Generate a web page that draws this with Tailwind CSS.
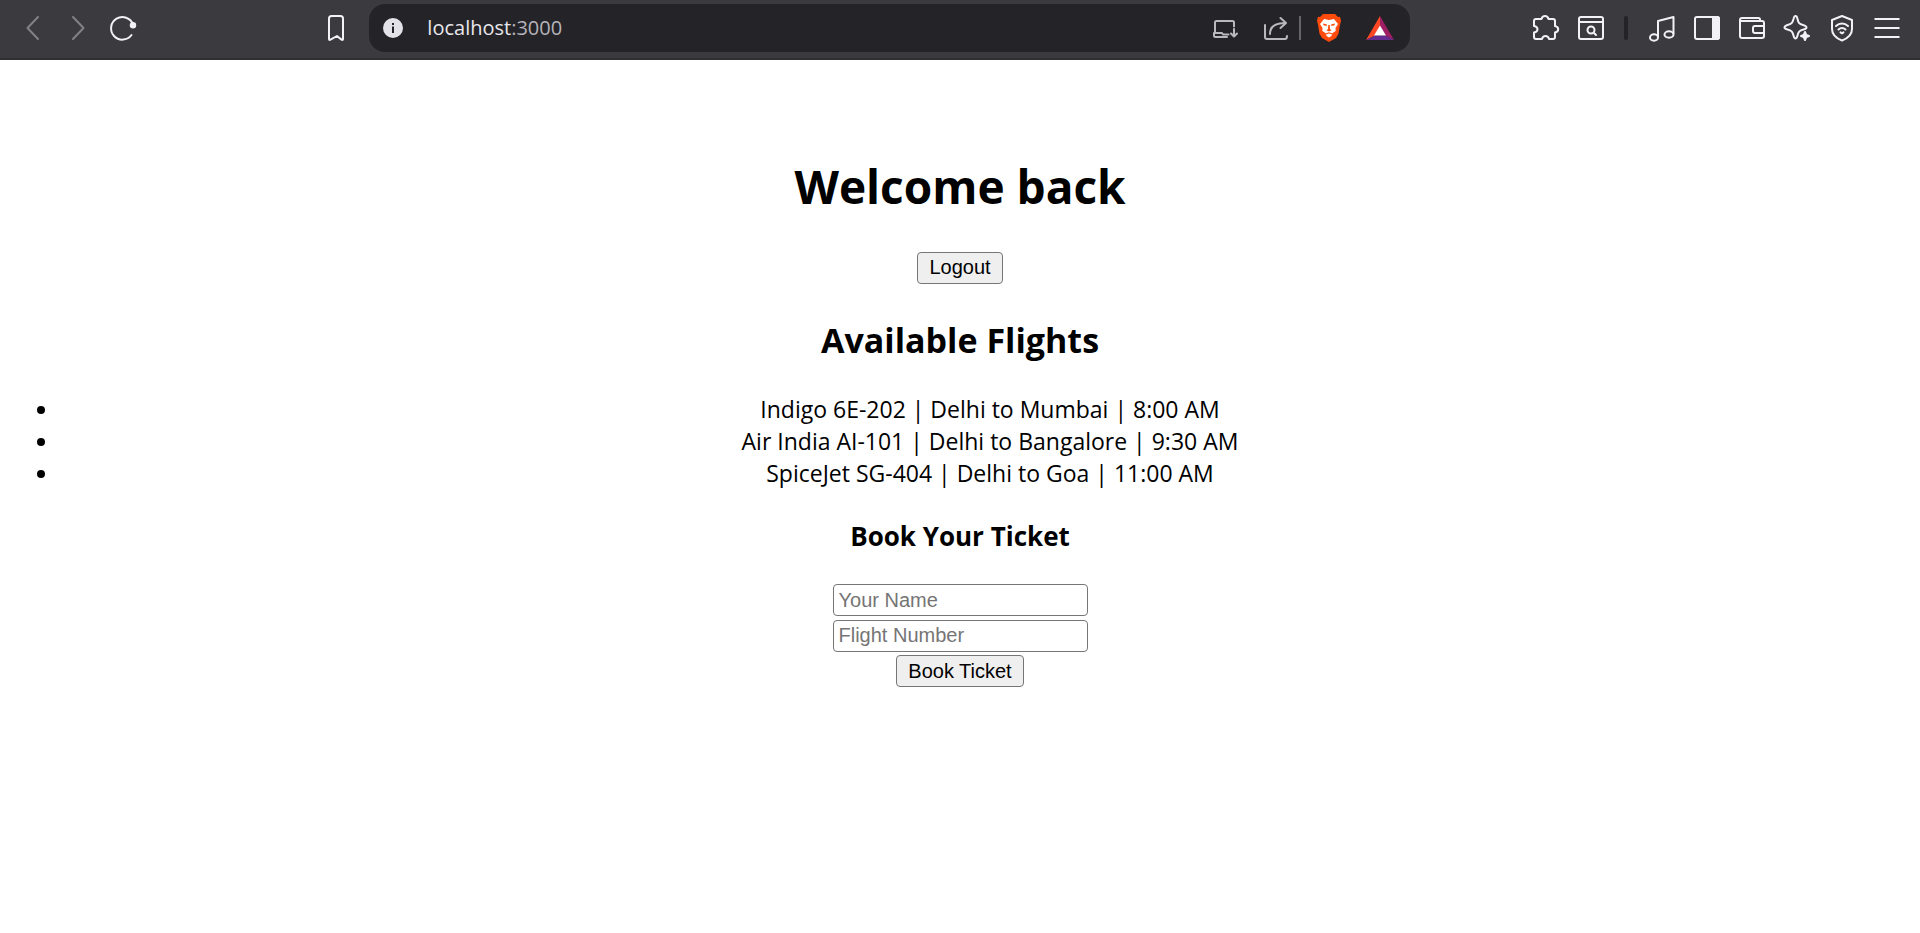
<!DOCTYPE html>
<html lang="en">
<head>
<meta charset="utf-8">
<meta name="viewport" content="width=device-width, initial-scale=1">
<title>Flight Booking</title>
<script src="https://cdn.jsdelivr.net/npm/@tailwindcss/browser@4"></script>
</head>
<body class="min-h-screen bg-white text-black font-['Segoe_UI','Open_Sans',sans-serif]">
<header class="flex h-[60px] items-start border-b-2 border-[#2f2e33] bg-[#3b3a3f] pt-1 pr-[11px] pl-[10px] text-[#f2f1f7]">
  <nav class="flex h-12 items-center" aria-label="Navigation">
    <button class="flex w-[45px] justify-center text-[#828187]" aria-label="Back"><svg class="size-7" viewBox="0 0 28 28" fill="none" stroke="currentColor" stroke-width="2" stroke-linecap="round" stroke-linejoin="round"><path d="M19 3 8.500 14 19 25"/></svg></button>
    <button class="flex w-[45px] justify-center text-[#828187]" aria-label="Forward"><svg class="size-7" viewBox="0 0 28 28" fill="none" stroke="currentColor" stroke-width="2" stroke-linecap="round" stroke-linejoin="round"><path d="M9 3 19.500 14 9 25"/></svg></button>
    <button class="flex w-[45px] justify-center" aria-label="Reload"><svg class="size-7" viewBox="0 0 28 28" fill="none" stroke="currentColor" stroke-width="2" stroke-linecap="round"><path d="M24 10.500A11.300 11.300 0 1 0 22.500 21"/><circle cx="24" cy="11.300" r="3.200" fill="currentColor" stroke="none"/></svg></button>
  </nav>
  <button class="mr-[11px] ml-auto flex h-12 w-[45px] shrink-0 items-center justify-center" aria-label="Bookmark"><svg class="size-7" viewBox="0 0 28 28" fill="none" stroke="currentColor" stroke-width="2" stroke-linejoin="round"><path d="M8.500 2h9a2.500 2.500 0 0 1 2.500 2.500V25q0 1.500-1.500.6L14 22 7.500 25.600Q6 26.500 6 25V4.500A2.500 2.500 0 0 1 8.500 2Z" transform="translate(1 0)"/></svg></button>
  <div class="flex h-12 w-[54.8%] shrink-0 items-center rounded-2xl bg-[#242328] pr-4 pl-[14px]">
    <button aria-label="Site information"><svg class="size-5" viewBox="0 0 20 20"><circle cx="10" cy="10" r="10" fill="#e4e2e9"/><path d="M9 5h2v2H9zM9 8.500h2V15H9z" fill="#242328"/></svg></button>
    <div class="ml-6 text-[20px] leading-7 text-[#e8e7ec]">localhost<span class="text-[#b5b4ba]">:3000</span></div>
    <div class="ml-auto flex items-center text-[#b9b8bf]">
      <button class="mr-[23px]" aria-label="Install app"><svg class="size-7" viewBox="0 0 28 28" fill="none" stroke="currentColor" stroke-width="2" stroke-linecap="round" stroke-linejoin="round"><path d="M4 18V8.500A1.500 1.500 0 0 1 5.500 7h16A1.500 1.500 0 0 1 23 8.500v4M3 19h8l1 1.500h5.500M16 23H4.500A1.500 1.500 0 0 1 3 21.500V19M23 15v7M20 19.500l3 3 3-3"/></svg></button>
      <button class="mr-[9px]" aria-label="Share"><svg class="size-7" viewBox="0 0 28 28" fill="none" stroke="currentColor" stroke-width="2" stroke-linecap="round" stroke-linejoin="round"><path d="M3 11v12a2 2 0 0 0 2 2h18q2 0 2-3M8 20C8 13 12 9 23 9M18.500 4l5.500 5-5.500 5"/></svg></button>
      <span class="h-6 w-[2px] bg-[#65646a]"></span>
      <button class="ml-[14px]" aria-label="Brave Shields"><svg class="size-7" viewBox="0 0 28 28"><path d="M8 0h12l3 3 2-.2 1 4-1 4-1.500 9L21 24l-7 4-7-4-2.500-4.200L3 10.800 2 6.800l1-4L5 3z" fill="#ff4b0b"/><path d="m9 5 5 1 5-1 4 5-2.500 4 .2 3-3.200 2-1 3-2.500 1.500L11.500 22l-1-3-3.200-2 .2-3L5 10z" fill="#fff"/><path d="m8 9.500 4 .9-.5 1.600-3-.7zM20 9.500l-4 .9.500 1.600 3-.7zM13.300 11h1.400l.3 4 1.500 1.300L14 17.500l-2.500-1.200L13 15zM10.500 19.500 14 18.300l3.500 1.200-.7.900L14 19.500l-2.800.9z" fill="#ff4b0b"/></svg></button>
      <button class="ml-[23px]" aria-label="Brave Rewards"><svg class="size-7" viewBox="0 0 28 28"><path d="M14 2 0 26l9-4.500 5-9z" fill="#ff4724"/><path d="m14 2 14 24-9-4.500-5-9z" fill="#9e1f63"/><path d="M0 26h28l-9-4.500H9z" fill="#662d91"/><path d="m14 11.500 6 10H8z" fill="#fff"/></svg></button>
    </div>
  </div>
  <div class="ml-[113px] flex h-12 shrink-0 items-center">
    <button class="flex w-[45px] justify-center" aria-label="Extensions"><svg class="size-7" viewBox="0 0 28 28" fill="none" stroke="currentColor" stroke-width="2" stroke-linejoin="round"><path d="M4 5h5.500C10 3 11 2 13 2s3 1 3.500 3H21a2 2 0 0 1 2 2v5c2 .5 3.200 1.500 3.200 3.200S25 18 23 18.500V23a2 2 0 0 1-2 2h-4c-.5-2-1.500-3-3.500-3S10.500 23 10 25H4a2 2 0 0 1-2-2v-4.500c2-.3 3.500-1.300 3.500-3.200S4 12.300 2 12V7a2 2 0 0 1 2-2Z"/></svg></button>
    <button class="flex w-[45px] justify-center" aria-label="Search page"><svg class="size-7" viewBox="0 0 28 28" fill="none" stroke="currentColor" stroke-width="2" stroke-linecap="round"><rect x="2" y="3" width="24" height="22" rx="2"/><path d="M2 8h24M17 19l2 2"/><circle cx="14" cy="16" r="3.500"/></svg></button>
    <span class="mx-[11px] h-6 w-1 rounded-full bg-[#242328]"></span>
    <button class="flex w-[45px] justify-center" aria-label="Music"><svg class="size-7" viewBox="0 0 28 28" fill="none" stroke="currentColor" stroke-width="2" stroke-linejoin="round"><path d="M10 23V7L25.500 3v17"/><ellipse cx="6" cy="23.500" rx="4" ry="3.200"/><ellipse cx="21" cy="20.500" rx="4.500" ry="3.200"/></svg></button>
    <button class="flex w-[45px] justify-center" aria-label="Sidebar"><svg class="size-7" viewBox="0 0 28 28" fill="none" stroke="currentColor" stroke-width="2"><rect x="2" y="3" width="24" height="22" rx="2"/><path d="M20 3h4a2 2 0 0 1 2 2v18a2 2 0 0 1-2 2h-4z" fill="currentColor"/></svg></button>
    <button class="flex w-[45px] justify-center" aria-label="Wallet"><svg class="size-7" viewBox="0 0 28 28" fill="none" stroke="currentColor" stroke-width="2" stroke-linejoin="round"><path d="M22 7V5.500A1.500 1.500 0 0 0 20.500 4H4a2 2 0 0 0-2 2v16a2 2 0 0 0 2 2h20a2 2 0 0 0 2-2V9a2 2 0 0 0-2-2H2M26 12h-9a2 2 0 0 0-2 2v3a2 2 0 0 0 2 2h9"/></svg></button>
    <button class="flex w-[45px] justify-center" aria-label="Leo AI"><svg class="size-7" viewBox="0 0 28 28" fill="none" stroke="currentColor" stroke-width="2" stroke-linejoin="round"><path d="M12.500 2c1.500 0 1.600 1 2 3 .8 4 1.800 5 5.500 6 2.500.7 3.500 1 3.500 2.500 0 1-1 1.500-3 2-4 1-5 2-6 6-.5 2-.8 3-2 3s-1.500-1-2-3c-1-4-2-5-6-6-2-.5-3-1-3-2s1-1.800 3-2.500c4-1 5-2 6-6 .4-2 .8-3 2-3Z"/><path d="m22 18 1.200 2.800 2.800 1.200-2.800 1.200-1.200 2.800-1.200-2.800-2.800-1.200 2.800-1.200z" fill="currentColor"/></svg></button>
    <button class="flex w-[45px] justify-center" aria-label="VPN"><svg class="size-7" viewBox="0 0 28 28" fill="none" stroke="currentColor" stroke-width="2" stroke-linejoin="round" stroke-linecap="round"><path d="m14 2 10 4v9c0 5.500-3.500 9-10 11.500C7.500 24 4 20.500 4 15V6z"/><path d="M8 12c3.500-3.500 8.500-3.500 12 0M10.500 15.500c2-2 5-2 7 0"/><path d="m12.500 18.300 1.500 1 1.500-1"/></svg></button>
    <button class="flex w-[45px] justify-center" aria-label="Menu"><svg class="size-7" viewBox="0 0 28 28" fill="none" stroke="currentColor" stroke-width="2"><path d="M1.500 5h25M1.500 14h25M1.500 23h25"/></svg></button>
  </div>
</header>
<main class="flex flex-col items-center pt-[94px] text-center">
  <h1 class="text-[46px] leading-[64px] font-bold">Welcome back</h1>
  <button class="mt-[34px] h-8 rounded-[4px] border border-[#767676] bg-[#efefef] px-[11px] pb-0.5 font-['Liberation_Sans',sans-serif] text-[20px] leading-7">Logout</button>
  <h2 class="mt-8 text-[34px] leading-[48px] font-bold">Available Flights</h2>
  <ul class="mt-[29px] w-full list-disc pl-[60px] text-[23px] leading-8">
    <li>Indigo 6E-202 | Delhi to Mumbai | 8:00 AM</li>
    <li>Air India AI-101 | Delhi to Bangalore | 9:30 AM</li>
    <li>SpiceJet SG-404 | Delhi to Goa | 11:00 AM</li>
  </ul>
  <h3 class="mt-7 text-[26px] leading-[38px] font-bold">Book Your Ticket</h3>
  <form class="mt-[29px] flex flex-col items-center font-['Liberation_Sans',sans-serif] text-[20px]">
    <input type="text" aria-label="Your Name" placeholder="Your Name" class="mb-1 h-8 w-[255px] rounded-[4px] border border-[#767676] px-[5px] placeholder:text-[#757575]">
    <input type="text" aria-label="Flight Number" placeholder="Flight Number" class="mb-[3px] h-8 w-[255px] rounded-[4px] border border-[#767676] px-[5px] pb-0.5 placeholder:text-[#757575]">
    <button type="button" class="h-8 rounded-[4px] border border-[#767676] bg-[#efefef] px-[11px] leading-7">Book Ticket</button>
  </form>
</main>
</body>
</html>
